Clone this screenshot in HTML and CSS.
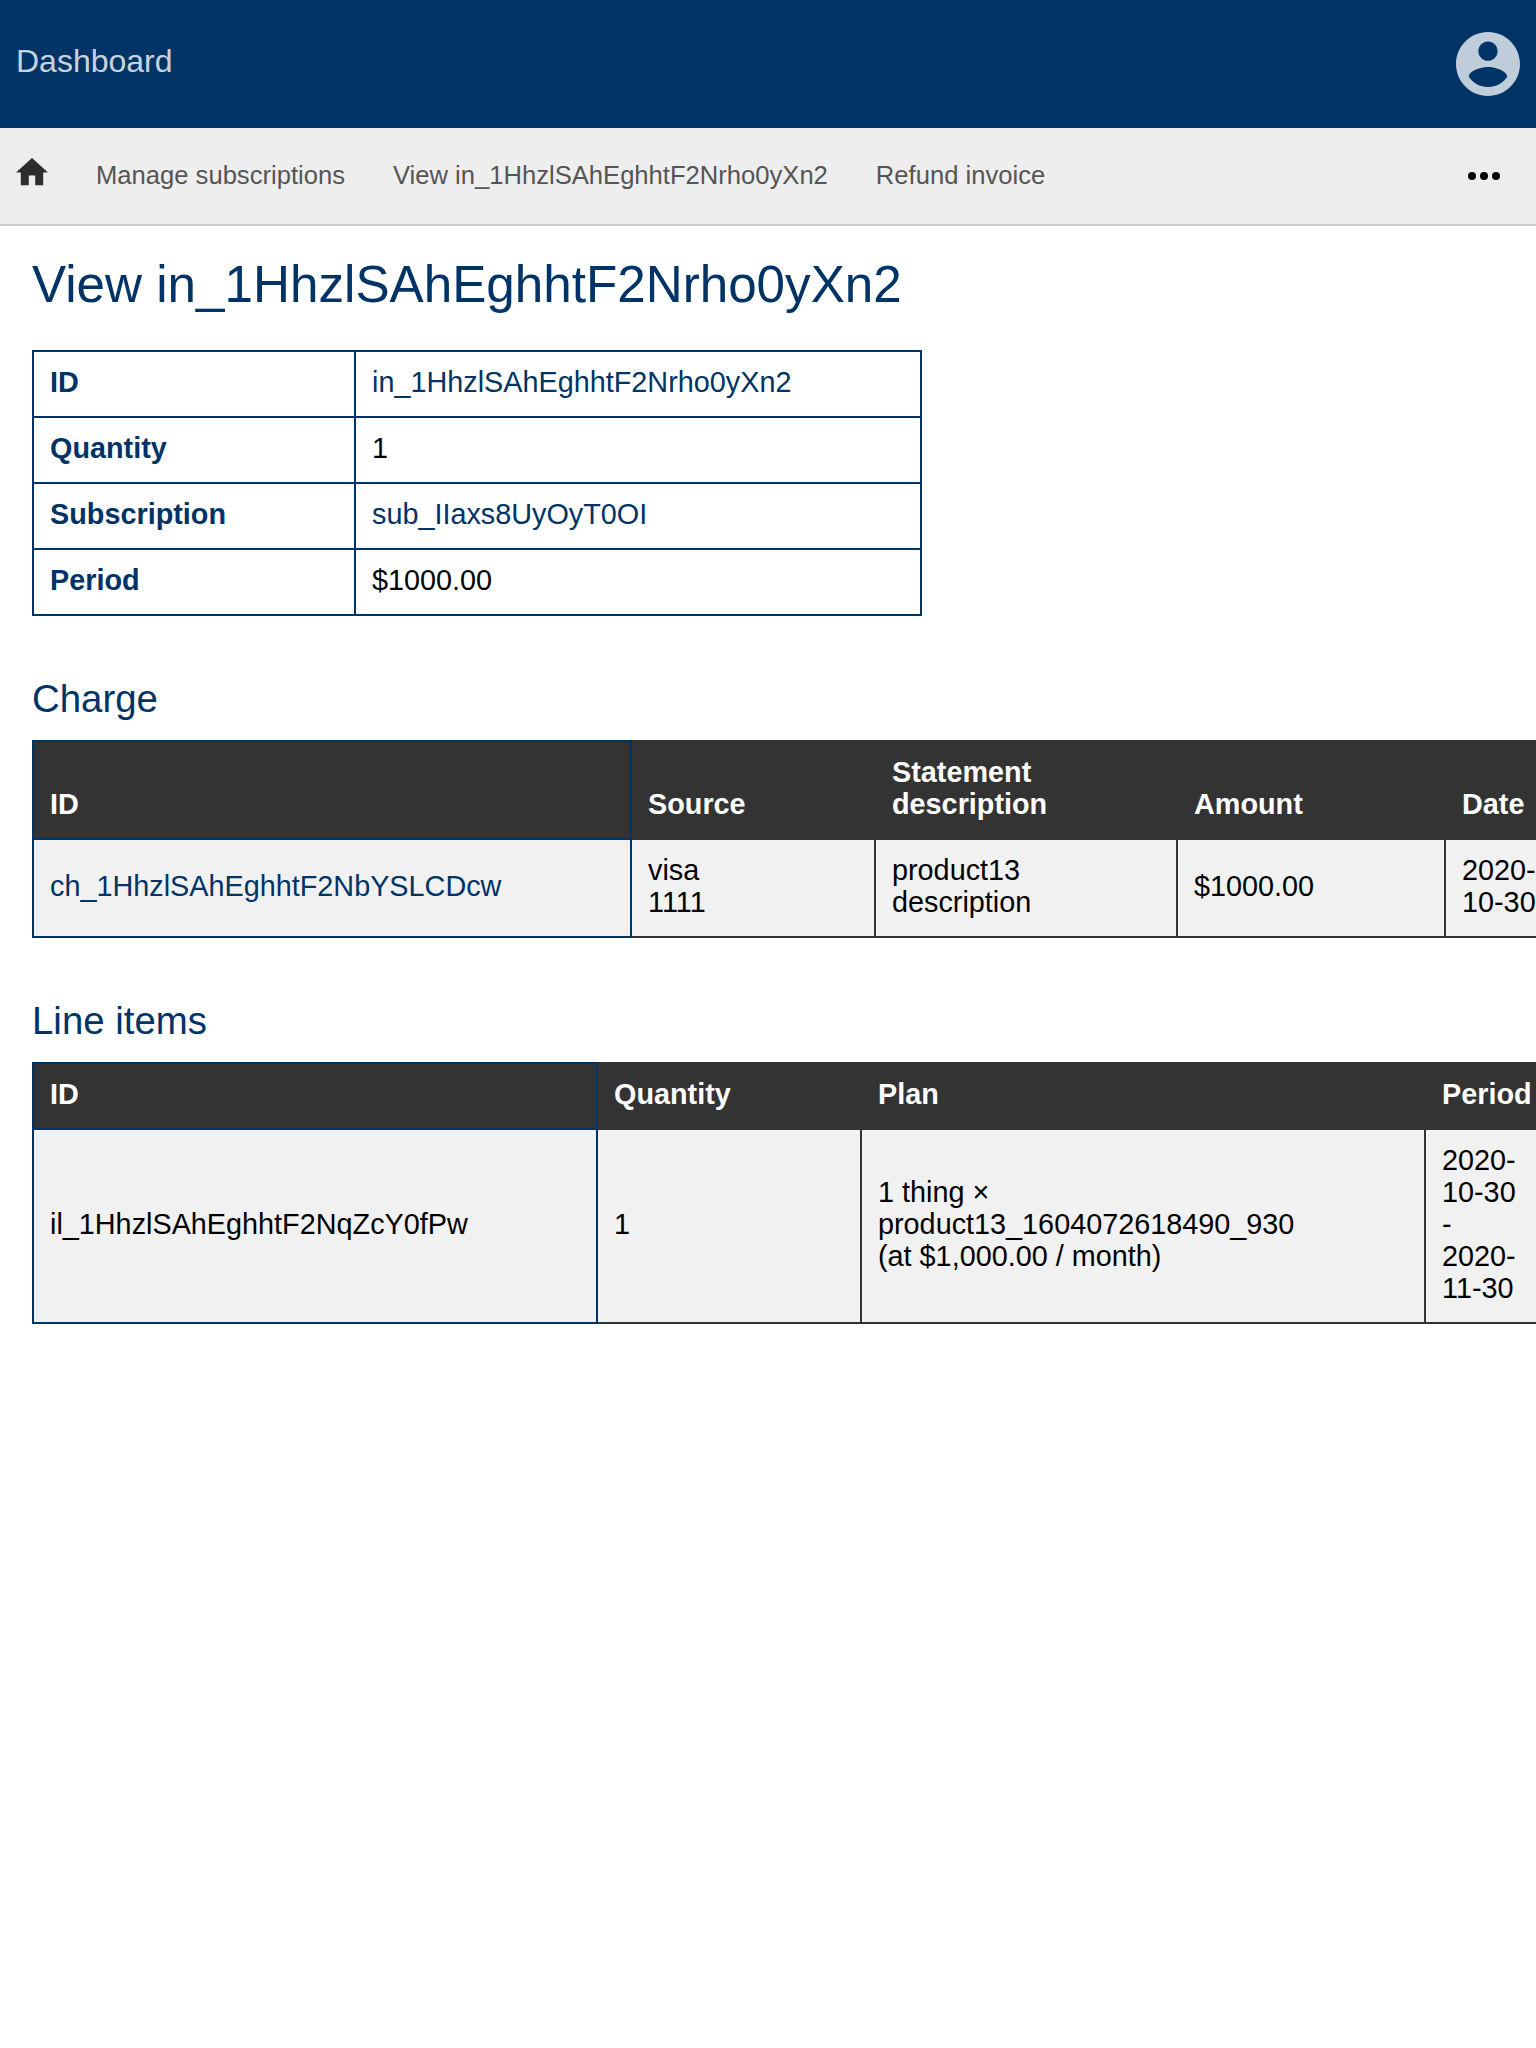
FILE: index.html
```html
<!DOCTYPE html>
<html lang="en">
<head>
<meta charset="utf-8">
<title>Dashboard</title>
<link rel="stylesheet" href="styles.css">
</head>
<body>
<header class="topbar">
  <a class="brand">Dashboard</a>
  <svg class="account" viewBox="2 2 20 20"><path d="M12 2C6.48 2 2 6.48 2 12s4.480 10 10 10 10-4.480 10-10S17.520 2 12 2zm0 3c1.660 0 3 1.340 3 3s-1.340 3-3 3-3-1.340-3-3 1.340-3 3-3zm0 14.200c-2.500 0-4.710-1.280-6-3.220.030-1.990 4-3.080 6-3.080 1.990 0 5.970 1.090 6 3.080-1.290 1.940-3.500 3.220-6 3.220z"/></svg>
</header>
<nav class="navbar">
  <svg class="home" viewBox="2 3 20 17"><path d="M10 20v-6h4v6h5v-8h3L12 3 2 12h3v8z"/></svg>
  <a>Manage subscriptions</a>
  <a>View in_1HhzlSAhEghhtF2Nrho0yXn2</a>
  <a>Refund invoice</a>
  <svg class="more" viewBox="0 0 32 8"><circle cx="4" cy="4" r="4"/><circle cx="16" cy="4" r="4"/><circle cx="28" cy="4" r="4"/></svg>
</nav>
<main class="content">
  <h1>View in_1HhzlSAhEghhtF2Nrho0yXn2</h1>
  <table class="details">
    <colgroup><col class="w-label"><col class="w-value"></colgroup>
    <tr><th>ID</th><td><a>in_1HhzlSAhEghhtF2Nrho0yXn2</a></td></tr>
    <tr><th>Quantity</th><td>1</td></tr>
    <tr><th>Subscription</th><td><a>sub_IIaxs8UyOyT0OI</a></td></tr>
    <tr><th>Period</th><td>$1000.00</td></tr>
  </table>

  <h2>Charge</h2>
  <table class="list charge">
    <colgroup><col class="w-id"><col class="w-source"><col class="w-statement"><col class="w-amount"><col class="w-date"></colgroup>
    <thead><tr><th>ID</th><th>Source</th><th>Statement description</th><th>Amount</th><th>Date</th></tr></thead>
    <tbody><tr><td><a>ch_1HhzlSAhEghhtF2NbYSLCDcw</a></td><td>visa<br>1111</td><td>product13<br>description</td><td>$1000.00</td><td>2020-<br>10-30</td></tr></tbody>
  </table>

  <h2>Line items</h2>
  <table class="list items">
    <colgroup><col class="w-id"><col class="w-quantity"><col class="w-plan"><col class="w-period"></colgroup>
    <thead><tr><th>ID</th><th>Quantity</th><th>Plan</th><th>Period</th></tr></thead>
    <tbody><tr><td>il_1HhzlSAhEghhtF2NqZcY0fPw</td><td>1</td><td>1 thing ×<br>product13_1604072618490_930<br>(at $1,000.00 / month)</td><td>2020-<br>10-30<br>-<br>2020-<br>11-30</td></tr></tbody>
  </table>
</main>
</body>
</html>
```
FILE: styles.css
```css
* { box-sizing: border-box; }
html { overflow: hidden; background: #fff; }
body {
  margin: 0;
  width: 1536px;
  min-height: 2048px;
  overflow: hidden;
  font-family: "Liberation Sans", Arial, sans-serif;
  font-size: 28.8px;
  line-height: 32px;
  color: #000;
}
.topbar {
  display: flex;
  justify-content: space-between;
  align-items: center;
  height: 128px;
  padding: 0 16px;
  background: #003366;
}
.brand {
  font-size: 32px;
  line-height: 36px;
  padding-bottom: 6px;
  color: rgba(255, 255, 255, .8);
}
.account { width: 64px; height: 64px; fill: #bfccd9; }
.navbar {
  display: flex;
  align-items: center;
  gap: 48px;
  height: 98px;
  padding: 0 36px 0 16px;
  background: #eee;
  border-bottom: 2px solid #ccc;
  font-size: 25.6px;
  color: #555;
}
.navbar a { padding-bottom: 2px; }
.home { width: 32px; height: 27.2px; margin-bottom: 8px; fill: #2d2d2d; }
.more { width: 32px; height: 8px; margin-left: auto; fill: #000; }

.content { padding: 29px 32px; }
h1, h2 { font-weight: 400; color: #003366; }
h1 { margin: 0 0 35px; font-size: 51.2px; line-height: 60px; }
h2 { margin: 61px 0 19px; font-size: 38.4px; line-height: 44px; }

table { border-collapse: collapse; table-layout: fixed; }
th, td {
  padding: 14px 16px 18px;
  border: 2px solid #003366;
  text-align: left;
  vertical-align: middle;
}
table a { color: #003366; }
.details { width: 890px; }
.details th { color: #003366; }
.w-label { width: 322px; }
.w-value { width: 566px; }

.list th { background: #333; color: #fff; vertical-align: bottom; }
.list td { background: #f1f1f1; }
.list th + th, .list td + td { border-color: #333; }
.charge { width: 1538px; }
.charge .w-id { width: 598px; }
.w-source { width: 244px; }
.w-statement { width: 302px; }
.w-amount { width: 268px; }
.w-date { width: 124px; }
.items { width: 1538px; }
.items .w-id { width: 564px; }
.w-quantity { width: 264px; }
.w-plan { width: 564px; }
.w-period { width: 144px; }
```
